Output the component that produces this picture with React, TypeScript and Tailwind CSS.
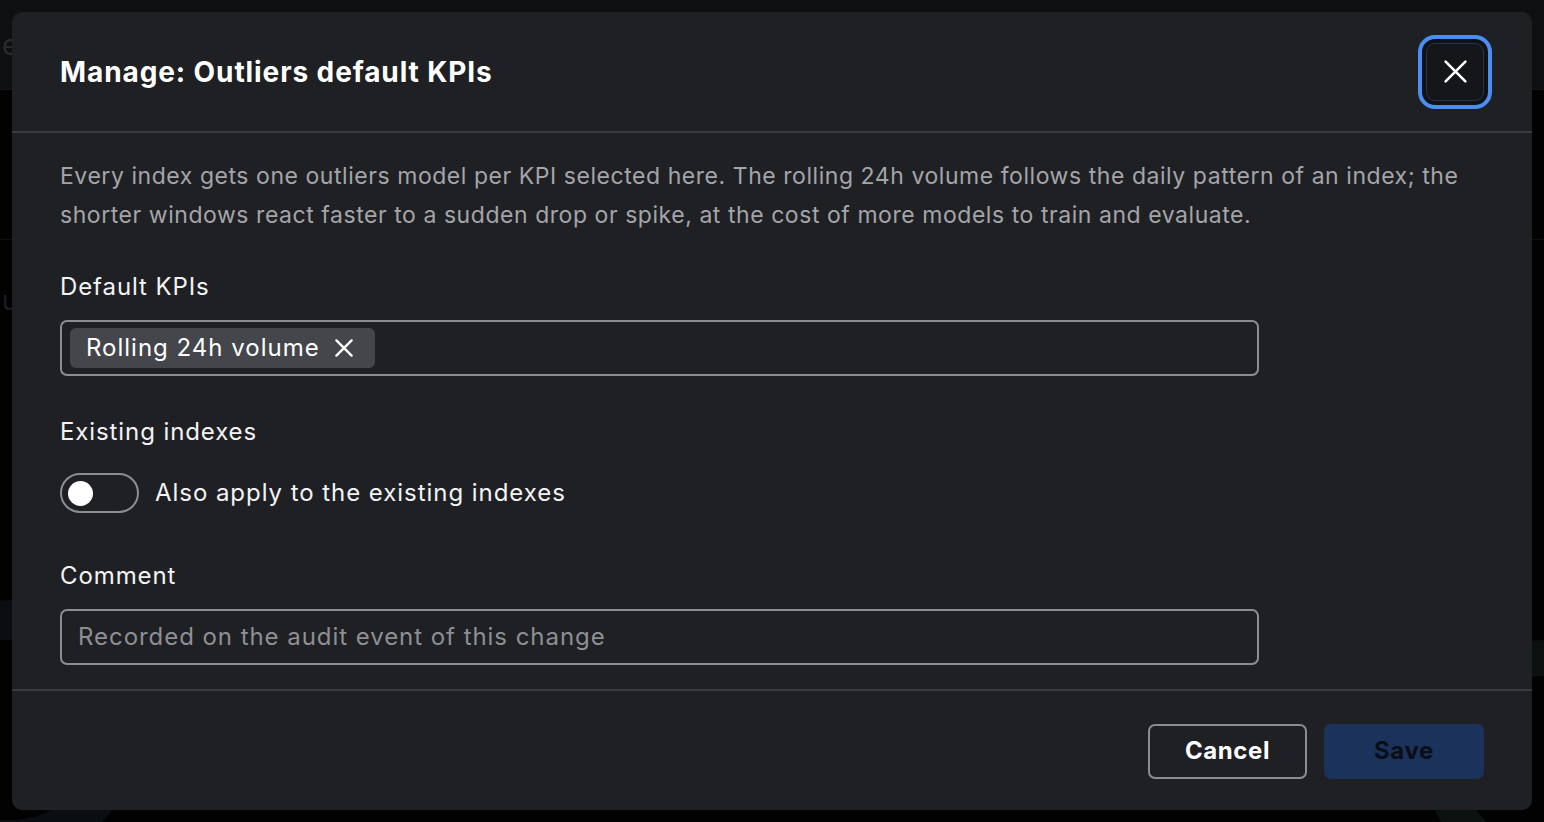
function Cross({ size, stroke }: { size: number; stroke: number }) {
  return (
    <svg width={size} height={size} viewBox={`0 0 ${size} ${size}`} fill="none" stroke="currentColor" strokeWidth={stroke} strokeLinecap="round">
      <path d={`M${stroke} ${stroke}L${size - stroke} ${size - stroke}M${size - stroke} ${stroke}L${stroke} ${size - stroke}`} />
    </svg>
  );
}

export default function App() {
  return (
    <div className="relative w-full h-[822px] bg-[#020203] overflow-hidden font-['Inter','Liberation_Sans',sans-serif]">
      {/* dimmed page behind the dialog */}
      <div className="h-[90px] bg-[#0e0f11] border-b border-[#141518] flex items-center">
        <span className="text-[28px] text-[#2a2b2e] pl-[2px]">e</span>
      </div>
      <div className="h-[150px] border-b border-[#0f1012]" />
      <div className="flex items-center h-[120px]">
        <span className="text-[26px] text-[#1c1d20] pl-[2px]">us</span>
      </div>
      <div className="absolute -left-[120px] top-[600px] w-[260px] h-[260px] rounded-full border-[40px] border-[#0a0d12]" />
      <div className="absolute -right-[120px] top-[640px] w-[240px] h-[240px] rounded-full border-[36px] border-[#0b110e]" />

      {/* dialog */}
      <div className="absolute inset-0 p-[12px] flex">
        <div className="flex-1 flex flex-col bg-[#1f2024] rounded-[10px] text-[#f3f3f4]">
          <header className="h-[121px] shrink-0 px-[48px] flex items-center justify-between border-b-2 border-[#3a3b40]">
            <h1 className="text-[28px] font-bold tracking-[0.9px] text-white">Manage: Outliers default KPIs</h1>
            <button className="w-[58px] h-[58px] rounded-[9px] bg-[#15161a] border border-[#26334a] flex items-center justify-center outline-[4px] outline-solid outline-[#4a8ef2] outline-offset-[4px] shadow-[0_0_0_4px_#111215] text-white">
              <Cross size={25} stroke={2.6} />
            </button>
          </header>

          <div className="flex-1 px-[48px] pt-[24px] pb-[24px] border-b-2 border-[#3a3b40]">
            <p className="text-[23px] leading-[39px] tracking-[0.55px] text-[#a4a5a9] max-w-[1420px]">
              Every index gets one outliers model per KPI selected here. The rolling 24h volume follows the daily pattern of an index; the shorter windows react faster to a sudden drop or spike, at the cost of more models to train and evaluate.
            </p>

            <div className="mt-[34px] text-[24px] leading-[36px] tracking-[0.9px]">Default KPIs</div>
            <div className="mt-[15px] w-[1199px] h-[56px] rounded-[7px] border-2 border-[#8c8d91] flex items-center px-[8px]">
              <span className="h-[40px] rounded-[6px] bg-[#45464b] flex items-center gap-[14px] pl-[16px] pr-[21px] text-[24px] tracking-[1px] text-white">
                Rolling 24h volume
                <Cross size={20} stroke={2.4} />
              </span>
            </div>

            <div className="mt-[38px] text-[24px] leading-[36px] tracking-[0.9px]">Existing indexes</div>
            <div className="mt-[23px] flex items-center gap-[16px]">
              <span className="w-[79px] h-[40px] rounded-full border-2 border-[#8c8d91] flex items-center pl-[6px]">
                <span className="w-[25px] h-[25px] rounded-full bg-white" />
              </span>
              <span className="text-[24px] tracking-[0.95px] text-[#f3f3f4]">Also apply to the existing indexes</span>
            </div>

            <div className="mt-[45px] text-[24px] leading-[36px] tracking-[0.9px]">Comment</div>
            <div className="mt-[15px] w-[1199px] h-[56px] rounded-[7px] border-2 border-[#8c8d91] flex items-center px-[16px]">
              <span className="text-[24px] tracking-[0.95px] text-[#8e8f93]">Recorded on the audit event of this change</span>
            </div>
          </div>

          <footer className="h-[120px] shrink-0 px-[48px] flex items-center justify-end gap-[17px]">
            <button className="w-[159px] h-[55px] rounded-[7px] border-2 border-[#8c8d91] text-[24px] font-bold tracking-[0.6px] text-white">Cancel</button>
            <button className="w-[160px] h-[55px] rounded-[7px] bg-[#1b325b] text-[24px] font-bold tracking-[0.6px] text-[#0a0e17]">Save</button>
          </footer>
        </div>
      </div>
    </div>
  );
}
